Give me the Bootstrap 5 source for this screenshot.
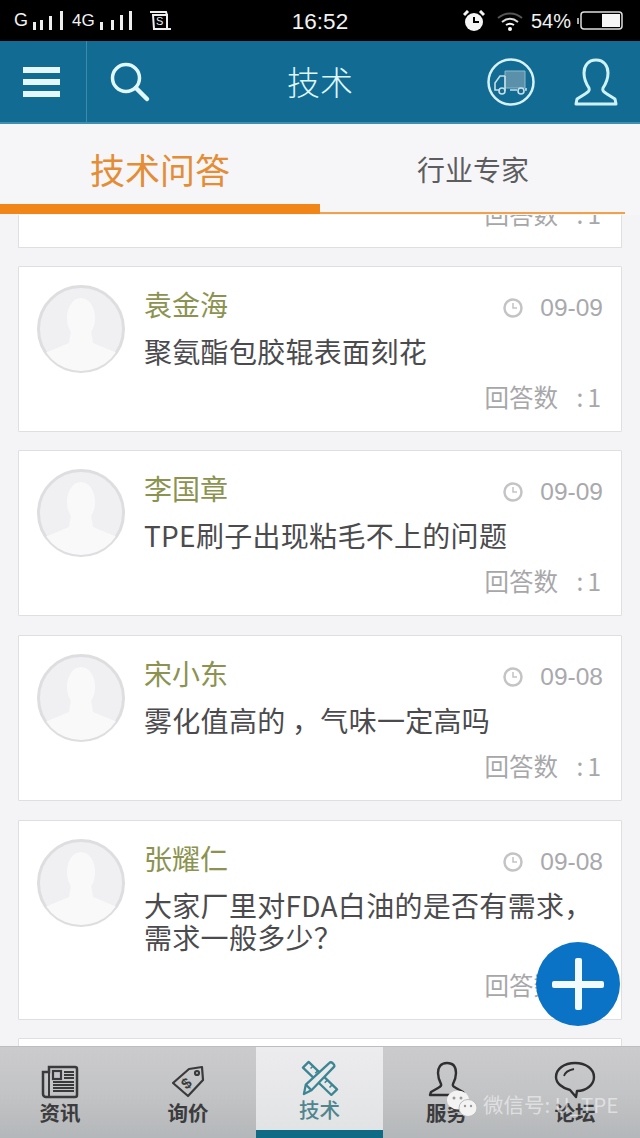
<!DOCTYPE html>
<html lang="zh">
<head>
<meta charset="utf-8">
<title>技术</title>
<link href="https://cdn.jsdelivr.net/npm/bootstrap@5.3.0/dist/css/bootstrap.min.css" rel="stylesheet">
<style>
html,body{margin:0;height:1138px;overflow:hidden}
body{font-family:"Noto Sans CJK SC","Liberation Sans",sans-serif;background:#f4f4f6}
.phone{width:640px;height:1138px;position:relative;overflow:hidden}
.statusbar{height:41px;background:#000;color:#f2f2f2;flex:none;padding:0 17px 0 14px}
.st-g{font-size:18px;font-family:"Liberation Sans",sans-serif}
.st-bars{margin-left:5px}
.st-4g{font-size:17px;margin-left:9px;font-family:"Liberation Sans",sans-serif}
.st-sim{margin-left:17px}
.st-time{font-size:22.5px;font-family:"Liberation Sans",sans-serif;width:130px;text-align:center;position:absolute;left:255px;top:5px}
.st-pct{font-size:20px;font-family:"Liberation Sans",sans-serif}
.st-right{gap:6px}
.st-wifi{margin:0 2px 0 6px}
.appbar{height:83px;background:#126b92;flex:none;color:#dff6fb;border-bottom:2px solid #3f8fb2;position:relative}
.menu-cell{width:87px;height:100%;border-right:1px solid #3f8aac}
.menu-icon{margin-right:2px}
.search-icon{margin-left:22px}
.app-title{position:absolute;left:0;right:0;top:17px;text-align:center;font-size:33px;line-height:46px;font-weight:300}
.app-right{gap:38px;padding-right:22px}
.tabsbar{height:91px;background:#f6f6f9;flex:none;position:relative}
.tab-a{width:320px;padding-left:90px;font-size:35px;color:#e48d35;line-height:50px;padding-top:20px;font-weight:400}
.tab-b{padding-left:97px;font-size:28px;color:#5d5d60;line-height:40px;padding-top:25px}
.tab-thick{position:absolute;left:0;top:80px;width:320px;height:10px;background:#f28518}
.tab-thin{position:absolute;left:320px;top:88px;width:305px;height:2px;background:#f2a04a}
.qlist{flex:1 1 auto;min-height:0;overflow:hidden;padding:0 18px;display:flex;flex-direction:column;gap:18px}
.qcard{background:#fff;border:1px solid #dfdfe2;border-radius:1px;padding:18px 18px 0 18px;flex:none;position:relative}
.qcard-cut{height:33px;padding:0 20px 0 0;border-top:0;overflow:hidden;display:flex;justify-content:flex-end;align-items:flex-end}
.qcard-s{height:166px}
.qcard-nudge{margin-top:1px}
.qcard-l{height:200px;margin-top:1px}
.qcard-next{height:40px}
.qavatar{width:88px;height:88px;flex:none;display:block}
.qbody{padding-left:19px;flex:1 1 auto;min-width:0}
.qname{font-size:28px;line-height:40px;color:#8c9350;margin-top:-1px}
.qdate{color:#a9a9ad;font-size:24.5px;line-height:40px;font-family:"Liberation Sans",sans-serif;position:absolute;right:18px;top:21px;gap:17px}
.qtitle{font-size:28px;line-height:32px;color:#4b4b4e;margin-top:11px;letter-spacing:.3px}
.qans{font-size:24.5px;line-height:34px;color:#a7a7aa;white-space:nowrap;word-spacing:13px}
.qcolon{margin-right:4px}
.qans-pos{position:absolute;right:20px;bottom:17px}
.qcard-cut .qans{margin-bottom:16px}
.bottomnav{height:92px;flex:none;background:linear-gradient(#cbcbce,#c3c4c6 50%,#b4b7b9);border-top:1px solid #bdbdc0;position:relative}
.navcell{text-align:center;color:#3c3c3e;font-size:20.5px;line-height:24px;font-weight:700;padding-top:18px}
.navcell svg{display:block;margin:0 auto 1px}
.nav-w1{width:120px}
.nav-w2{width:136px}
.nav-w3{width:127px}
.nav-w5{width:130px}
.navcell-on{background:linear-gradient(#ececee,#e2e3e5);border-bottom:8px solid #0f6a85;color:#4f858f;font-weight:500;height:91px;padding-top:13px}
.nav-tall{padding-top:14px}
.fab{position:absolute;left:536px;top:942px;width:84px;height:84px;border-radius:50%;background:#0a73c5}
.fab::before,.fab::after{content:"";position:absolute;background:#f1fafd;border-radius:2px}
.fab::before{left:16px;right:16px;top:39px;height:7px}
.fab::after{top:16px;bottom:16px;left:39px;width:7px}
.mark-w{position:absolute;left:447px;top:1089px;color:rgba(245,245,245,.62);font-size:20.5px;line-height:30px;white-space:nowrap}
.mark-w svg{margin-right:6px}
</style>
</head>
<body>
<div class="phone d-flex flex-column">
  <div class="statusbar d-flex align-items-center">
    <span class="st-g">G</span>
    <svg width="30" height="20" class="st-bars" viewBox="0 0 30 20" fill="#eee"><rect x="0" y="11" width="3" height="8"/><rect x="7" y="9" width="3" height="10"/><rect x="16" y="5" width="3" height="14"/><rect x="27" y="0" width="3" height="19"/></svg>
    <span class="st-4g">4G</span>
    <svg width="32" height="20" class="st-bars" viewBox="0 0 32 20" fill="#eee"><rect x="0" y="11" width="3" height="8"/><rect x="11" y="9" width="3" height="10"/><rect x="20" y="4" width="3" height="15"/><rect x="29" y="0" width="3" height="19"/></svg>
    <svg width="24" height="22" class="st-sim" viewBox="0 0 24 22" fill="none" stroke="#eee" stroke-width="2"><path d="M1 2h16l1 3M22 19H5L4 5h14v14"/><text x="7" y="15" font-size="11" fill="#eee" stroke="none" font-family="Liberation Sans">S</text></svg>
    <span class="st-time">16:52</span>
    <div class="ms-auto d-flex align-items-center st-right">
      <svg width="22" height="22" viewBox="0 0 22 22"><circle cx="11" cy="12" r="9" fill="#f5f5f5"/><path d="M11 7v5h5" stroke="#000" stroke-width="2" fill="none"/><path d="M1 5l4-4M21 5l-4-4" stroke="#f5f5f5" stroke-width="3"/></svg>
      <svg width="26" height="20" class="st-wifi" viewBox="0 0 26 20" fill="none"><path d="M1 7c7-6 17-6 24 0" stroke="#555" stroke-width="2"/><path d="M5 11c5-4 11-4 16 0" stroke="#ddd" stroke-width="2"/><path d="M9 14c3-2 5-2 8 0" stroke="#fff" stroke-width="2"/><circle cx="13" cy="18" r="2" fill="#fff"/></svg>
      <span class="st-pct">54%</span>
      <svg width="46" height="20" viewBox="0 0 46 20"><rect x="0" y="7" width="2" height="6" fill="#aaa"/><rect x="4" y="1" width="41" height="17" rx="3" fill="#000" stroke="#ddd" stroke-width="1.5"/><rect x="25" y="3" width="18" height="13" fill="#f6f6f6"/></svg>
    </div>
  </div>

  <div class="appbar d-flex align-items-center">
    <div class="menu-cell d-flex align-items-center justify-content-center">
      <svg width="38" height="30" class="menu-icon" viewBox="0 0 38 30" fill="#e4f8fc"><rect width="37" height="6" y="0"/><rect width="37" height="6" y="12"/><rect width="37" height="6" y="24"/></svg>
    </div>
    <svg width="42" height="42" class="search-icon" viewBox="0 0 42 42" fill="none" stroke="#e0f7fb" stroke-linecap="round"><circle cx="17" cy="17" r="13.5" stroke-width="3.5"/><path d="M27 27l11 11" stroke-width="4.5"/></svg>
    <div class="app-title">技术</div>
    <div class="ms-auto d-flex align-items-center app-right">
      <svg width="50" height="50" viewBox="0 0 50 50" fill="none" stroke="#d6f2f8"><circle cx="25" cy="25" r="22.5" stroke-width="2.5"/><path d="M19 14h20v17H19z" fill="#5a90aa" stroke="#8db9cb" stroke-width="1"/><path d="M19 19h-5l-5 7v7h4M19 19v14h-1M24 33h7M39 33h1v-2" stroke="#c5dfe8" stroke-width="1.6"/><circle cx="16" cy="34" r="3" stroke="#c5dfe8" stroke-width="1.6"/><circle cx="35" cy="34" r="3" stroke="#c5dfe8" stroke-width="1.6"/></svg>
      <svg width="44" height="48" viewBox="0 0 44 48" fill="none" stroke="#cdf3f9" stroke-width="3" stroke-linejoin="round"><path d="M22 2c-8 0-12 6-12 13 0 6 3 12 5 15 1 3-1 4-4 6l-8 5-1 5h40l-1-5-8-5c-3-2-5-3-4-6 2-3 5-9 5-15 0-7-4-13-12-13z"/></svg>
    </div>
  </div>

  <div class="tabsbar d-flex">
    <div class="tab-a">技术问答</div>
    <div class="tab-b">行业专家</div>
    <div class="tab-thick"></div>
    <div class="tab-thin"></div>
  </div>

  <div class="qlist">
    <div class="qcard qcard-cut"><div class="qans">回答数 <span class="qcolon">:</span>1</div></div>

    <div class="qcard qcard-s d-flex">
      <svg class="qavatar" viewBox="0 0 88 88"><defs><clipPath id="cp1"><circle cx="44" cy="44" r="42"/></clipPath></defs><circle cx="44" cy="44" r="42.5" fill="#f0f0f2" stroke="#dedee0" stroke-width="3"/><g clip-path="url(#cp1)" fill="#f9f9fa"><ellipse cx="44" cy="33" rx="14" ry="20"/><path d="M34 46h20l2 12 24 10v20H8V68l24-10z"/></g></svg>
      <div class="qbody"><div class="qname">袁金海</div><div class="qtitle">聚氨酯包胶辊表面刻花</div></div>
      <div class="qdate d-flex align-items-center"><svg width="20" height="20" viewBox="0 0 20 20" fill="none" stroke="#c4c4c7" stroke-width="2.5"><circle cx="10" cy="10" r="8.5"/><path d="M10 5v5h4" stroke-width="1.5"/></svg><span>09-09</span></div>
      <div class="qans qans-pos">回答数 <span class="qcolon">:</span>1</div>
    </div>

    <div class="qcard qcard-s d-flex">
      <svg class="qavatar" viewBox="0 0 88 88"><defs><clipPath id="cp2"><circle cx="44" cy="44" r="42"/></clipPath></defs><circle cx="44" cy="44" r="42.5" fill="#f0f0f2" stroke="#dedee0" stroke-width="3"/><g clip-path="url(#cp2)" fill="#f9f9fa"><ellipse cx="44" cy="33" rx="14" ry="20"/><path d="M34 46h20l2 12 24 10v20H8V68l24-10z"/></g></svg>
      <div class="qbody"><div class="qname">李国章</div><div class="qtitle">TPE刷子出现粘毛不上的问题</div></div>
      <div class="qdate d-flex align-items-center"><svg width="20" height="20" viewBox="0 0 20 20" fill="none" stroke="#c4c4c7" stroke-width="2.5"><circle cx="10" cy="10" r="8.5"/><path d="M10 5v5h4" stroke-width="1.5"/></svg><span>09-09</span></div>
      <div class="qans qans-pos">回答数 <span class="qcolon">:</span>1</div>
    </div>

    <div class="qcard qcard-s qcard-nudge d-flex">
      <svg class="qavatar" viewBox="0 0 88 88"><defs><clipPath id="cp3"><circle cx="44" cy="44" r="42"/></clipPath></defs><circle cx="44" cy="44" r="42.5" fill="#f0f0f2" stroke="#dedee0" stroke-width="3"/><g clip-path="url(#cp3)" fill="#f9f9fa"><ellipse cx="44" cy="33" rx="14" ry="20"/><path d="M34 46h20l2 12 24 10v20H8V68l24-10z"/></g></svg>
      <div class="qbody"><div class="qname">宋小东</div><div class="qtitle">雾化值高的 ，气味一定高吗</div></div>
      <div class="qdate d-flex align-items-center"><svg width="20" height="20" viewBox="0 0 20 20" fill="none" stroke="#c4c4c7" stroke-width="2.5"><circle cx="10" cy="10" r="8.5"/><path d="M10 5v5h4" stroke-width="1.5"/></svg><span>09-08</span></div>
      <div class="qans qans-pos">回答数 <span class="qcolon">:</span>1</div>
    </div>

    <div class="qcard qcard-l d-flex">
      <svg class="qavatar" viewBox="0 0 88 88"><defs><clipPath id="cp4"><circle cx="44" cy="44" r="42"/></clipPath></defs><circle cx="44" cy="44" r="42.5" fill="#f0f0f2" stroke="#dedee0" stroke-width="3"/><g clip-path="url(#cp4)" fill="#f9f9fa"><ellipse cx="44" cy="33" rx="14" ry="20"/><path d="M34 46h20l2 12 24 10v20H8V68l24-10z"/></g></svg>
      <div class="qbody"><div class="qname">张耀仁</div><div class="qtitle">大家厂里对FDA白油的是否有需求，<br>需求一般多少？</div></div>
      <div class="qdate d-flex align-items-center"><svg width="20" height="20" viewBox="0 0 20 20" fill="none" stroke="#c4c4c7" stroke-width="2.5"><circle cx="10" cy="10" r="8.5"/><path d="M10 5v5h4" stroke-width="1.5"/></svg><span>09-08</span></div>
      <div class="qans qans-pos">回答数 <span class="qcolon">:</span>1</div>
    </div>

    <div class="qcard qcard-next"></div>
  </div>

  <div class="bottomnav d-flex">
    <div class="navcell nav-w1">
      <svg width="38" height="34" viewBox="0 0 38 34" fill="none" stroke="#3a3a3c"><path d="M8 2h26a2 2 0 0 1 2 2v26a2 2 0 0 1-2 2H5a3 3 0 0 1-3-3V7h6z" stroke-width="2.5"/><path d="M8 2v30" stroke-width="2"/><rect x="12" y="6" width="8" height="8" stroke-width="2.2"/><path d="M23 7h10M23 10h10M23 13h10M12 17h21M12 20h21M12 23h21M12 26h21" stroke-width="1.8"/></svg>
      <div>资讯</div>
    </div>
    <div class="navcell nav-w2">
      <svg width="36" height="34" viewBox="0 0 36 34" fill="none" stroke="#3a3a3c" stroke-width="2.2" stroke-linejoin="round"><path d="M3 18L19 4l13-2 1 13-15 16z"/><circle cx="27" cy="8" r="2"/><text x="12" y="23" font-size="15" font-weight="700" fill="#3a3a3c" stroke="none" font-family="Liberation Sans" transform="rotate(-40 17 18)">$</text></svg>
      <div>询价</div>
    </div>
    <div class="navcell nav-w3 navcell-on">
      <svg width="40" height="36" viewBox="0 0 40 38" fill="none" stroke="#3c8593" stroke-width="2.4" stroke-linejoin="round"><path d="M2 8l6-6 30 29-6 6z"/><path d="M10 9l3-3M15 14l3-3M20 19l3-3M25 24l3-3M30 29l3-3" stroke-width="1.6"/><path d="M3 36l2-10L30 3c2-2 6 2 5 4L11 32z" fill="#e8e9ea"/><path d="M5 26l6 6"/></svg>
      <div>技术</div>
    </div>
    <div class="navcell nav-w3 nav-tall">
      <svg width="38" height="38" viewBox="0 0 38 38" fill="none" stroke="#2f2f31" stroke-width="2.4" stroke-linejoin="round"><path d="M19 2c-7 0-9 5-9 10 0 5 2 9 3 11 1 2-1 3-3 4l-7 4-1 3h34l-1-3-7-4c-2-1-4-2-3-4 1-2 3-6 3-11 0-5-2-10-9-10z"/></svg>
      <div>服务</div>
    </div>
    <div class="navcell nav-w5 nav-tall">
      <svg width="42" height="38" viewBox="0 0 42 38" fill="none" stroke="#2f2f31" stroke-width="2.4" stroke-linejoin="round"><path d="M21 2c11 0 19 6 19 14s-8 14-17 14l-1 6-6-7C8 27 2 22 2 16 2 8 10 2 21 2z"/><path d="M10 15c1-4 5-6 10-7" stroke-width="1.8"/></svg>
      <div>论坛</div>
    </div>
  </div>

  <div class="fab" aria-label="新建"></div>
  <div class="mark-w d-flex align-items-center">
    <svg width="30" height="28" viewBox="0 0 30 28" fill="#f3f3f3"><ellipse cx="11" cy="10" rx="11" ry="9.5"/><ellipse cx="21" cy="18" rx="9" ry="8.5" stroke="#bbb" stroke-width="1"/><circle cx="7" cy="8" r="1.5" fill="#999"/><circle cx="14" cy="8" r="1.5" fill="#999"/><circle cx="18" cy="16" r="1.2" fill="#999"/><circle cx="24" cy="16" r="1.2" fill="#999"/></svg>
    <span>微信号: U_TPE</span>
  </div>
</div>
<script src="https://cdn.jsdelivr.net/npm/bootstrap@5.3.0/dist/js/bootstrap.bundle.min.js"></script>
</body>
</html>
